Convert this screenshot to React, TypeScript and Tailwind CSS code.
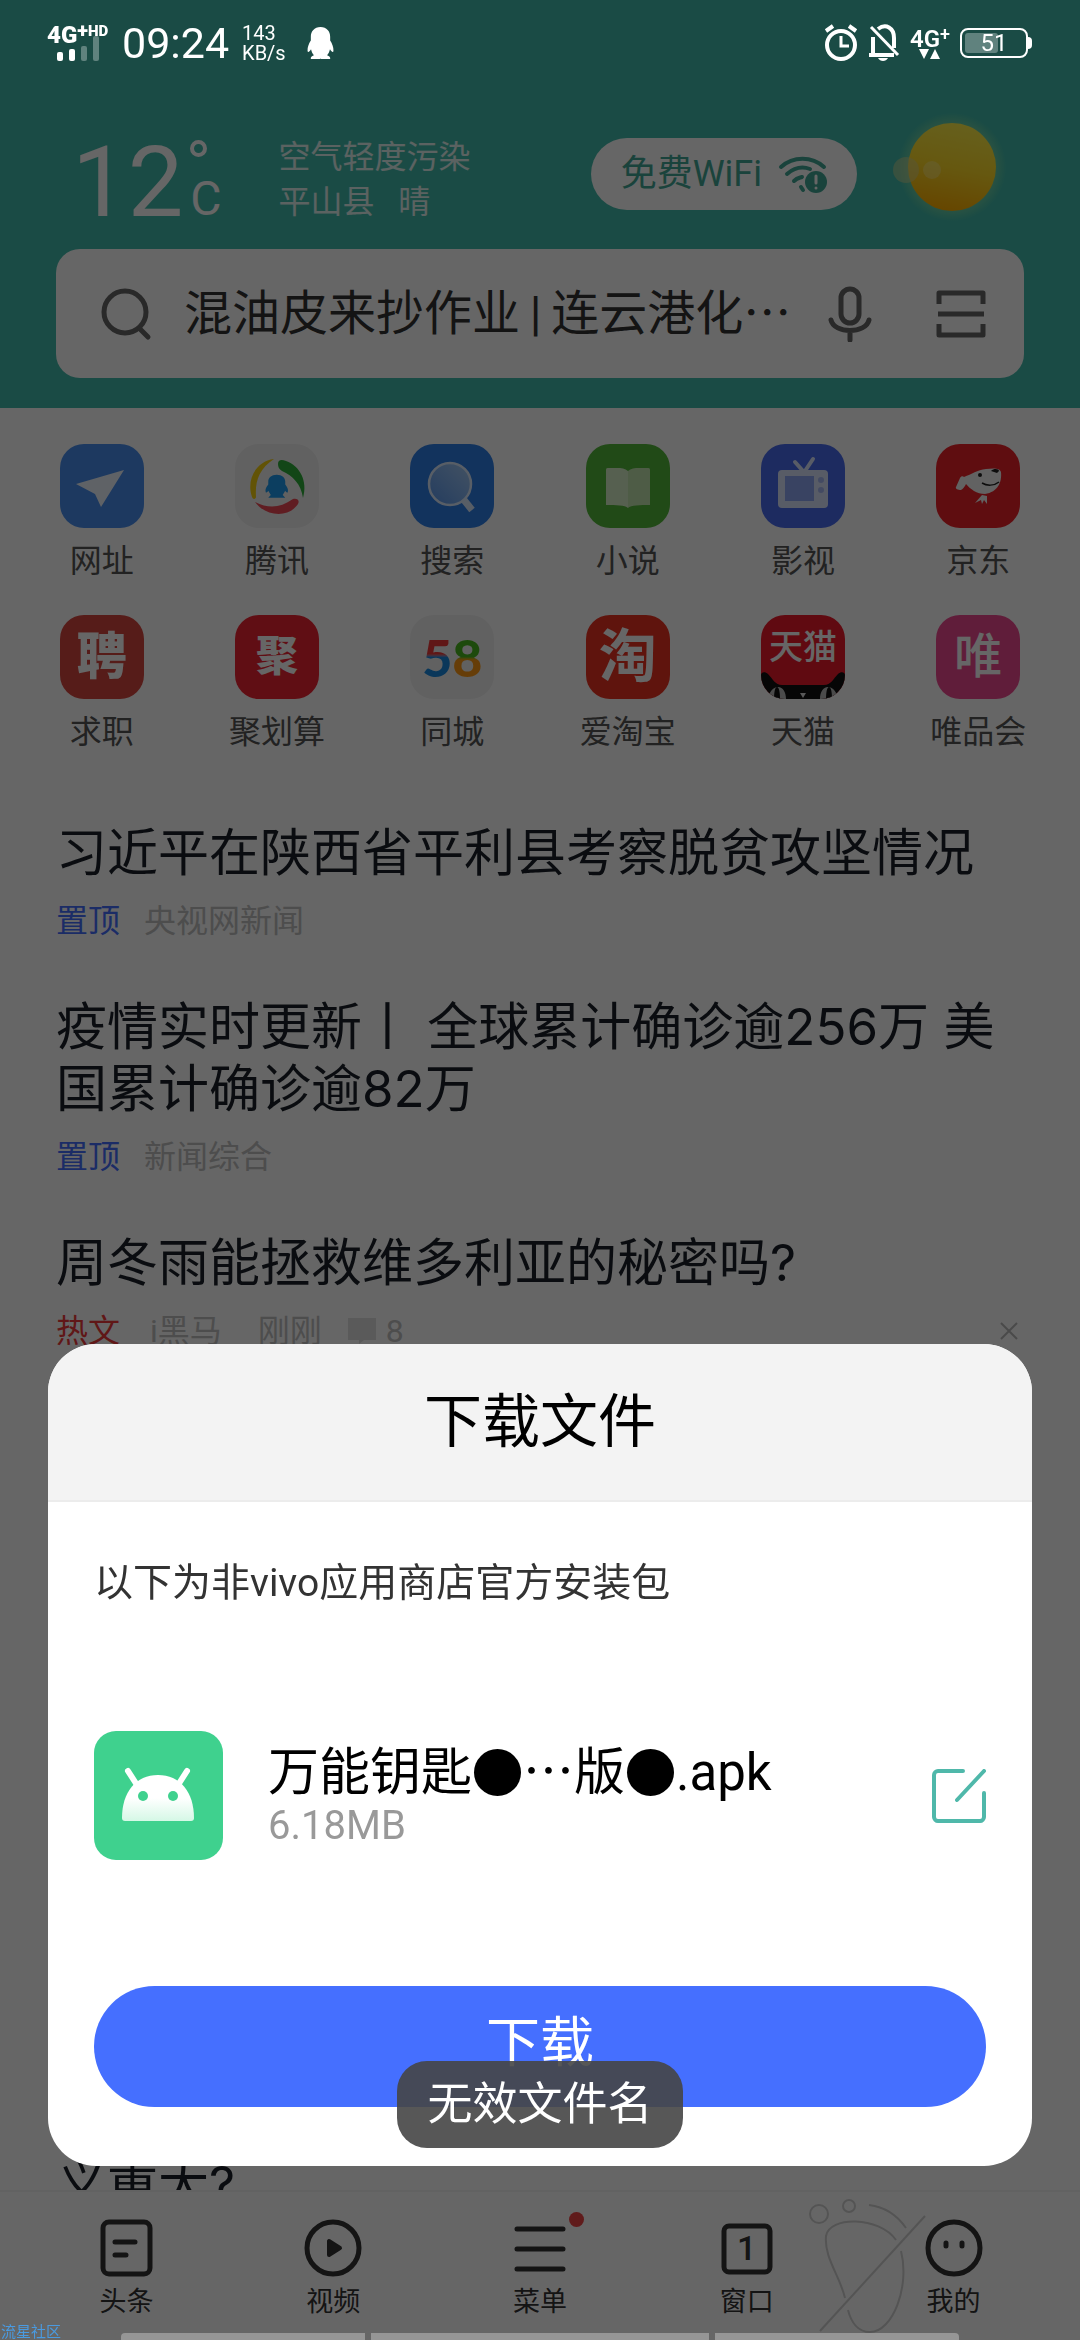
import type { ReactNode } from "react";

/* ---------- status bar glyphs ---------- */

function SignalBars() {
  return (
    <svg width="44" height="26" viewBox="0 0 44 26" fill="#fff">
      <rect x="1" y="16" width="6" height="9" rx="2" />
      <rect x="13" y="13" width="6" height="12" rx="2" />
      <rect x="25" y="10" width="6" height="15" rx="2" opacity="0.3" />
      <rect x="37" y="0" width="6" height="25" rx="2" opacity="0.3" />
    </svg>
  );
}

function PenguinGlyph() {
  return (
    <svg width="29" height="35" viewBox="0 0 30 36" fill="#fff">
      <path d="M15 1C8.6 1 5 5.6 5 11v4C3 18 1.4 22 1.6 25.5c.1 2.2 1.6 1.7 3.6-1.5.6 2.8 1.6 4.7 3 6.2-2.4.8-3.6 2.2-3.2 3.8h9.2c.5-.4 1.1-.4 1.6 0H25c.4-1.6-.8-3-3.2-3.8 1.4-1.5 2.4-3.4 3-6.2 2 3.2 3.5 3.7 3.6 1.5C28.6 22 27 18 25 15v-4C25 5.6 21.4 1 15 1z" />
    </svg>
  );
}

function AlarmGlyph() {
  return (
    <svg width="34" height="38" viewBox="0 0 34 38" fill="none" stroke="#fff" strokeWidth="4">
      <circle cx="17" cy="21" r="14" />
      <path d="M17 12v10h8" strokeWidth="3" />
      <path d="M2 7l7-5M32 7l-7-5" />
    </svg>
  );
}

function MutedBellGlyph() {
  return (
    <svg width="32" height="38" viewBox="0 0 32 38" fill="none" stroke="#fff" strokeWidth="4">
      <path d="M5 31V13M1 31h25M10 5c8-6 16-1 16 9v10" />
      <path d="M3 3l27 28" strokeWidth="3" />
      <path d="M10 34h10c-2 4-8 4-10 0z" fill="#fff" stroke="none" />
    </svg>
  );
}

function StatusBar() {
  return (
    <div className="fixed inset-x-0 top-0 z-20 flex h-[86px] items-center justify-between pl-[47px] pr-[48px] text-white">
      <div className="flex items-center">
        <div className="flex w-[66px] flex-col">
          <div className="relative z-10 flex h-[20px] items-start text-[24px] font-black leading-[22px]">
            4G<span className="text-[20px] leading-[12px]">+</span>
            <span className="text-[15px] leading-[14px]">HD</span>
          </div>
          <div className="-mt-2 pl-[9px]">
            <SignalBars />
          </div>
        </div>
        <span className="ml-[9px] text-[43px] leading-[52px]">09:24</span>
        <div className="ml-[13px] flex flex-col text-[20px] leading-[20px]">
          <span>143</span>
          <span>KB/s</span>
        </div>
        <span className="ml-[20px]">
          <PenguinGlyph />
        </span>
      </div>
      <div className="flex items-center gap-[10px]">
        <AlarmGlyph />
        <MutedBellGlyph />
        <div className="flex flex-col items-center">
          <div className="flex h-[22px] items-start text-[24px] font-semibold leading-[24px]">
            4G<span className="text-[18px] leading-[14px]">+</span>
          </div>
          <svg width="22" height="11" viewBox="0 0 22 11" fill="#fff">
            <path d="M0 0h10L5 10zM11 10h10L16 0z" />
          </svg>
        </div>
        <div className="flex items-center">
          <div className="relative flex h-[30px] w-[68px] items-center justify-center rounded-[8px] border-2 border-white">
            <div className="absolute inset-y-[3px] left-[3px] w-[33px] rounded-[3px] bg-white/30" />
            <span className="relative text-[24px] leading-[26px]">51</span>
          </div>
          <div className="h-[12px] w-[4px] rounded-r-[4px] bg-white" />
        </div>
      </div>
    </div>
  );
}

/* ---------- header ---------- */

function Sun() {
  return (
    <svg width="116" height="110" viewBox="0 0 116 110">
      <defs>
        <linearGradient id="sun" x1="0.6" y1="0" x2="0.4" y2="1">
          <stop offset="0" stopColor="#fff04a" />
          <stop offset="0.5" stopColor="#ffdc28" />
          <stop offset="1" stopColor="#ffae00" />
        </linearGradient>
        <radialGradient id="glow">
          <stop offset="0.8" stopColor="#7fd8a0" stopOpacity="0.6" />
          <stop offset="1" stopColor="#7fd8a0" stopOpacity="0" />
        </radialGradient>
      </defs>
      <circle cx="60" cy="55" r="54" fill="url(#glow)" />
      <circle cx="60" cy="55" r="44" fill="url(#sun)" />
      <circle cx="14" cy="58" r="13" fill="#d8d890" opacity="0.5" />
      <circle cx="40" cy="58" r="9" fill="#fff6a0" opacity="0.4" />
    </svg>
  );
}

function WifiAlert() {
  return (
    <svg width="50" height="38" viewBox="0 0 50 38" fill="none" stroke="#43a896" strokeWidth="4" strokeLinecap="round">
      <path d="M3 12C15 1 34 1 46 12" />
      <path d="M9 19c7-6 15-8 23-5" />
      <path d="M16 26c3-3 5-3 8-4" />
      <path d="M23 32l2 3" />
      <circle cx="38" cy="27" r="11" fill="#43a896" stroke="none" />
      <path d="M38 21v7M38 33v0" stroke="#fff" strokeWidth="3" />
    </svg>
  );
}

function Header() {
  return (
    <header className="flex flex-col bg-[#43bcac] px-14 pb-[30px] pt-[84px]">
      <div className="flex h-[165px] items-start pl-[16px] text-white">
        <span className="pt-[36px] text-[99px] leading-[124px]">12</span>
        <div className="flex flex-col pl-[7px] pt-[56px]">
          <span className="h-[17px] w-[17px] rounded-full border-4 border-white" />
          <span className="mt-[14px] text-[48px] leading-[56px]">C</span>
        </div>
        <div className="ml-[57px] whitespace-pre pt-[51px] text-[32px] leading-[45px] text-white/85">
          <p>空气轻度污染</p>
          <p>平山县{"   "}晴</p>
        </div>
        <div className="ml-auto flex items-start">
          <button className="mt-[54px] flex h-[72px] items-center gap-[16px] rounded-full bg-white pl-[30px] pr-[29px] text-[36px] text-[#43a896]">
            免费WiFi
            <WifiAlert />
          </button>
          <div className="ml-[35px] mr-[16px] mt-[28px]">
            <Sun />
          </div>
        </div>
      </div>
      <form className="flex h-[129px] items-center rounded-[24px] bg-white px-[38px]">
        <svg width="58" height="54" viewBox="0 0 58 54" fill="none" stroke="#666" strokeWidth="5" strokeLinecap="round">
          <circle cx="31" cy="25" r="21" />
          <path d="M46 42l8 8" />
        </svg>
        <input
          aria-label="搜索"
          className="ml-[32px] min-w-0 flex-1 bg-transparent text-[48px] leading-[60px] text-[#333] outline-none"
          defaultValue={"混油皮来抄作业\u2009|\u2009连云港化⋯"}
        />
        <button type="button" aria-label="语音搜索" className="ml-[20px]">
          <svg width="44" height="56" viewBox="0 0 44 56" fill="none" stroke="#666" strokeWidth="5" strokeLinecap="round">
            <rect x="13" y="3" width="18" height="34" rx="9" />
            <path d="M3 34c3 14 35 14 38 0M22 45v9" />
          </svg>
        </button>
        <button type="button" aria-label="扫一扫" className="ml-[64px]">
          <svg width="50" height="50" viewBox="0 0 50 50" fill="none" stroke="#666" strokeWidth="5" strokeLinejoin="round">
            <path d="M3 15V4h44v11M3 35v11h44V35M2 25h46" />
          </svg>
        </button>
      </form>
    </header>
  );
}

/* ---------- shortcuts ---------- */

const tile = "flex h-[84px] w-[84px] items-center justify-center overflow-hidden rounded-[24px]";

const SHORTCUTS: { label: string; icon: ReactNode }[] = [
  {
    label: "网址",
    icon: (
      <span className={`${tile} bg-[#4a90f0]`}>
        <svg width="84" height="84" viewBox="0 0 84 84">
          <path d="M16 40L64 26 41 63 35 50z" fill="#fff" opacity="0.9" />
        </svg>
      </span>
    ),
  },
  {
    label: "腾讯",
    icon: (
      <span className={`${tile} bg-[#f2f2f2]`}>
        <svg width="84" height="84" viewBox="0 0 84 84">
          <path d="M39 15C21 17 11 36 17 53c1 3 4 2 4 0-1-16 3-28 18-38z" fill="#f4cf10" />
          <path d="M43 20c0-4 3-5 8-3 14 5 22 20 17 37-2-14-10-22-21-27-3-2-4-4-4-7z" fill="#2eae3a" />
          <path d="M20 58c10 14 33 17 43 2 2-4-1-6-5-5-13 9-24 10-38 3z" fill="#f04a55" />
          <g transform="translate(29 30) scale(0.85 0.7)">
            <path
              d="M15 1C8.6 1 5 5.6 5 11v4c-2 3-4 7-3 11 1 1 2 0 3-2l3 6-3 4h20l-3-4 3-6c1 2 2 3 3 2 1-4-1-8-3-11v-4C25 5.6 21.4 1 15 1z"
              fill="#1f9cf0"
            />
          </g>
        </svg>
      </span>
    ),
  },
  {
    label: "搜索",
    icon: (
      <span className={`${tile} bg-[#2e7fe8]`}>
        <svg width="84" height="84" viewBox="0 0 84 84">
          <defs>
            <linearGradient id="lens" x1="1" y1="0" x2="0" y2="1">
              <stop offset="0" stopColor="#a8cdf8" />
              <stop offset="1" stopColor="#5a98ee" />
            </linearGradient>
          </defs>
          <path d="M54 56l8 10" stroke="#dcecff" strokeWidth="7" />
          <circle cx="40" cy="40" r="21" fill="url(#lens)" stroke="#dcecff" strokeWidth="2.5" />
        </svg>
      </span>
    ),
  },
  {
    label: "小说",
    icon: (
      <span className={`${tile} bg-[#54b83a]`}>
        <svg width="84" height="84" viewBox="0 0 84 84">
          <path d="M20 26c0-2 1-2 3-2 8 0 15-1 19 3v37c-3-3-12-3-22-3z" fill="#d6f0c8" />
          <path d="M64 26c0-2-1-2-3-2-8 0-15-1-19 3v37c3-3 12-3 22-3z" fill="#c2e6b0" />
        </svg>
      </span>
    ),
  },
  {
    label: "影视",
    icon: (
      <span className={`${tile} bg-[#4a6cf0]`}>
        <svg width="84" height="84" viewBox="0 0 84 84">
          <path d="M34 18l8 9M52 15l-8 12" stroke="#dde6ff" strokeWidth="4" strokeLinecap="round" />
          <rect x="17" y="26" width="50" height="38" rx="4" fill="#dde6ff" />
          <rect x="24" y="32" width="29" height="25" fill="#8fa8f6" />
          <circle cx="60" cy="36" r="3" fill="#a8baf4" />
          <circle cx="60" cy="46" r="3" fill="#a8baf4" />
        </svg>
      </span>
    ),
  },
  {
    label: "京东",
    icon: (
      <span className={`${tile} bg-[#ee2229]`}>
        <svg width="84" height="84" viewBox="0 0 84 84">
          <path d="M28 33c8-3 13-7 22-8 8-1 14-1 15 3 1 10-3 20-16 22-8 0-15-5-19-10-1 2-3 5-5 6-3 0-6-1-5-3l4-9c1-2 3-2 4-1z" fill="#f4f4f4" />
          <path d="M46 51l5 1v8l-3-4-2 4-1-4-6 3z" fill="#f4f4f4" />
          <path d="M46 39c5 3 12 3 17-1" fill="none" stroke="#222" strokeWidth="1.5" />
          <circle cx="44" cy="31" r="2" fill="#222" />
          <path d="M55 27c3-3 8-2 8 0l-2 2z" fill="#222" />
        </svg>
      </span>
    ),
  },
  {
    label: "求职",
    icon: <span className={`${tile} bg-[#d8463f] text-[50px] font-black text-white`}>聘</span>,
  },
  {
    label: "聚划算",
    icon: <span className={`${tile} bg-[#f02433] text-[42px] font-black text-white`}>聚</span>,
  },
  {
    label: "同城",
    icon: (
      <span className={`${tile} bg-[#f2f2f2] font-[Lato] text-[52px] font-black leading-[60px]`}>
        <span className="bg-linear-to-b from-[#f03a3a] from-45% to-[#1a8ae0] to-50% bg-clip-text text-transparent">5</span>
        <span className="bg-linear-to-b from-[#4ab81e] from-50% to-[#ff9a14] to-55% bg-clip-text text-transparent">8</span>
      </span>
    ),
  },
  {
    label: "爱淘宝",
    icon: <span className={`${tile} bg-[#ee3322] text-[58px] font-bold text-white`}>淘</span>,
  },
  {
    label: "天猫",
    icon: (
      <span className={`${tile} relative bg-[#f01a2c]`}>
        <svg className="absolute inset-0" width="84" height="84" viewBox="0 0 84 84">
          <path d="M0 84V60c0-3 4-4 7-1 5 5 7 11 14 11h42c7 0 9-6 14-11 3-3 7-2 7 1v24z" fill="#111" />
          <path d="M7 84c1-7 5-12 10-12s8 5 8 12zM59 84c0-7 3-12 8-12s9 5 10 12z" fill="#bbb" />
          <path d="M13 84c0-7 1-12 3-12s3 5 3 12zM65 84c0-7 1-12 3-12s3 5 3 12z" fill="#111" />
          <path d="M39 78h6l-3 5z" fill="#ddd" />
        </svg>
        <span className="relative mb-5 text-[34px] font-medium leading-[40px] text-white">天猫</span>
      </span>
    ),
  },
  {
    label: "唯品会",
    icon: <span className={`${tile} bg-[#f04a92] text-[48px] font-medium text-white`}>唯</span>,
  },
];

function Shortcuts() {
  return (
    <nav className="grid grid-cols-6 gap-y-[34px] px-[14px] pt-9">
      {SHORTCUTS.map((item) => (
        <a key={item.label} href="#" className="flex flex-col items-center gap-[13px] text-[32px] leading-[40px] text-[#555]">
          {item.icon}
          {item.label}
        </a>
      ))}
    </nav>
  );
}

/* ---------- news feed ---------- */

const headline = "font-[Inter,'Noto_Sans_CJK_SC',sans-serif] text-[51px] leading-[62px] text-[#1a2028]";
const meta = "mt-[14px] flex items-center text-[32px] leading-[46px] text-[#c0c0c0]";

function Feed() {
  return (
    <section className="flex flex-col gap-[52px] px-14 pt-[70px]">
      <article>
        <h2 className={headline}>习近平在陕西省平利县考察脱贫攻坚情况</h2>
        <p className={meta}>
          <span className="mr-6 text-[#456fff]">置顶</span>央视网新闻
        </p>
      </article>
      <article>
        <h2 className={headline}>疫情实时更新丨 全球累计确诊逾256万 美国累计确诊逾82万</h2>
        <p className={meta}>
          <span className="mr-6 text-[#456fff]">置顶</span>新闻综合
        </p>
      </article>
      <article>
        <h2 className={headline}>周冬雨能拯救维多利亚的秘密吗?</h2>
        <div className={meta}>
          <span className="mr-[30px] text-[#f03a3a]">热文</span>
          <span className="mr-[36px]">i黑马</span>
          <span className="mr-[24px]">刚刚</span>
          <svg className="mr-[8px]" width="32" height="26" viewBox="0 0 32 26" fill="#e0e0e0">
            <path d="M2 0h28v22H18l-5 4v-4H2z" />
          </svg>
          8
          <button aria-label="不感兴趣" className="ml-auto mr-[6px]">
            <svg width="18" height="18" viewBox="0 0 18 18" stroke="#b8b8b8" strokeWidth="2">
              <path d="M1 1l16 16M17 1L1 17" />
            </svg>
          </button>
        </div>
      </article>
      <article className="mt-[748px]">
        <h2 className={headline}>义重大?</h2>
      </article>
    </section>
  );
}

/* ---------- bottom tabs ---------- */

const TABS: { label: string; dot?: boolean; count?: number; icon: ReactNode }[] = [
  {
    label: "头条",
    icon: (
      <>
        <rect x="7" y="4" width="47" height="52" rx="6" />
        <path d="M19 24h20M19 37h11" />
      </>
    ),
  },
  {
    label: "视频",
    icon: (
      <>
        <circle cx="30" cy="30" r="26" />
        <path d="M26 23v14l11-7z" fill="#333" strokeWidth="4" strokeLinejoin="round" />
      </>
    ),
  },
  { label: "菜单", dot: true, icon: <path d="M7 11h46M7 31h46M7 51h46" /> },
  { label: "窗口", count: 1, icon: <rect x="7" y="8" width="46" height="46" rx="5" /> },
  {
    label: "我的",
    icon: (
      <>
        <circle cx="30" cy="30" r="26" />
        <path d="M22 25v3M38 25v3" />
      </>
    ),
  },
];

function Footprint() {
  return (
    <svg className="absolute right-[151px] top-1" width="120" height="140" viewBox="0 0 120 140" fill="none" stroke="#d2d2d2" strokeWidth="2">
      <circle cx="10" cy="18" r="9" />
      <circle cx="40" cy="10" r="6" />
      <path d="M60 9c17 2 28 10 37 23" />
      <path d="M87 44C70 20 20 20 17 40c-2 22 14 40 19 62" />
      <path d="M92 55c9 35-8 81-31 81-12 0-19-10-22-22" />
      <path d="M11 135L116 20" />
    </svg>
  );
}

function BottomTabs() {
  return (
    <nav className="relative flex h-[150px] shrink-0 border-t-2 border-[#f4f4f4] bg-white px-[23px] pt-[26px]">
      <Footprint />
      {TABS.map((tab) => (
        <a key={tab.label} href="#" className="relative flex flex-1 flex-col items-center gap-[6px] text-[27px] leading-[36px] text-[#333]">
          <span className="relative">
            <svg width="60" height="60" viewBox="0 0 60 60" fill="none" stroke="#333" strokeWidth="5" strokeLinecap="round">
              {tab.icon}
            </svg>
            {tab.count && (
              <span className="absolute inset-0 flex items-center justify-center text-[34px] font-medium leading-[60px]">{tab.count}</span>
            )}
            {tab.dot && <span className="absolute -right-[14px] -top-[6px] h-[15px] w-[15px] rounded-full bg-[#f04444]" />}
          </span>
          {tab.label}
        </a>
      ))}
    </nav>
  );
}

/* ---------- download dialog ---------- */

function AndroidIcon() {
  return (
    <svg width="129" height="129" viewBox="0 0 129 129">
      <defs>
        <linearGradient id="droid" x1="0" y1="0" x2="0" y2="1">
          <stop offset="0.5" stopColor="#fff" />
          <stop offset="1" stopColor="#d5f8e6" />
        </linearGradient>
      </defs>
      <rect width="129" height="129" rx="22" fill="#3fd18e" />
      <path d="M34 40l9 14M93 40l-9 14" stroke="#fff" strokeWidth="6" strokeLinecap="round" />
      <path d="M28 87c0-26 14-43 36-43s36 17 36 43c0 2-1 3-3 3H31c-2 0-3-1-3-3z" fill="url(#droid)" />
      <circle cx="49" cy="65" r="5" fill="#3fd18e" />
      <circle cx="79" cy="65" r="5" fill="#3fd18e" />
    </svg>
  );
}

function Blob() {
  return <span className="mx-[2px] inline-block h-[47px] w-[47px] rounded-full bg-black" />;
}

function DownloadDialog() {
  return (
    <div role="dialog" aria-labelledby="dialog-title" className="fixed inset-x-12 bottom-[174px] z-30 flex flex-col overflow-hidden rounded-[48px] bg-white">
      <h1 id="dialog-title" className="border-b-2 border-[#ececec] bg-[#f3f3f3] pb-[42px] pt-[42px] text-center text-[58px] leading-[72px] text-black">
        下载文件
      </h1>
      <div className="flex flex-col px-[46px] pb-[59px] pt-[57px]">
        <p className="text-[39px] leading-[48px] text-[#333]">以下为非vivo应用商店官方安装包</p>
        <div className="mt-[124px] flex items-center">
          <AndroidIcon />
          <div className="ml-[45px] flex flex-1 flex-col">
            <p className="flex items-center text-[51px] leading-[60px] text-black">
              万能钥匙
              <Blob />
              ⋯版
              <Blob />
              .apk
            </p>
            <p className="text-[40px] leading-[46px] text-[#999]">6.18MB</p>
          </div>
          <button aria-label="重命名">
            <svg width="54" height="54" viewBox="0 0 54 54" fill="none" stroke="#4fb8aa" strokeWidth="4" strokeLinecap="round" strokeLinejoin="round">
              <path d="M31 2H6c-2 0-4 2-4 4v42c0 2 2 4 4 4h42c2 0 4-2 4-4V24M52 2L25 31" />
            </svg>
          </button>
        </div>
        <button className="mt-[126px] h-[121px] rounded-full bg-[#456fff] pb-[6px] text-[54px] leading-[60px] text-white">下载</button>
      </div>
    </div>
  );
}

export default function App() {
  return (
    <div className="relative flex h-screen flex-col overflow-hidden bg-white font-[Roboto,'Noto_Sans_CJK_SC',sans-serif]">
      <Header />
      <main className="min-h-0 flex-1 overflow-hidden">
        <Shortcuts />
        <Feed />
      </main>
      <BottomTabs />

      <div className="fixed inset-0 z-10 bg-black/60" />
      <StatusBar />
      <DownloadDialog />

      {/* toast */}
      <div role="status" className="fixed inset-x-0 bottom-[192px] z-40 flex justify-center">
        <span className="rounded-[30px] bg-[#454545]/90 px-[30px] pb-[13px] pt-[14px] text-[45px] leading-[60px] text-white">无效文件名</span>
      </div>

      {/* system gesture hints */}
      <div className="fixed inset-x-[121px] bottom-0 z-20 flex h-[7px] gap-[6px]">
        <span className="w-[244px] rounded-tl-[4px] bg-[#969696]" />
        <span className="flex-1 bg-[#969696]" />
        <span className="w-[244px] rounded-tr-[4px] bg-[#969696]" />
      </div>
      <span className="fixed bottom-0 left-px z-20 text-[15px] leading-[16px] text-[#4a9ae0]">流星社区</span>
    </div>
  );
}
